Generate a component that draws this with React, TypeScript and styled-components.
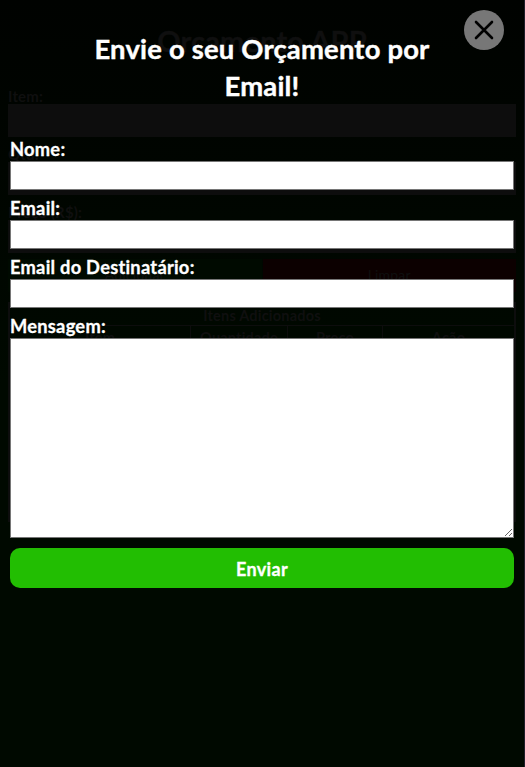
import React from "react";
import styled, { createGlobalStyle } from "styled-components";

const Global = createGlobalStyle`
  * { box-sizing: border-box; }
  body { margin: 0; background: #000300; font-family: Lato, Calibri, sans-serif; overflow: hidden; }
`;
const Stage = styled.div`
  display: grid; width: 525px; height: 767px; overflow: hidden;
  background: linear-gradient(#000200, #000900 50%, #000900);
  border-right: 1px solid #201e2a;
`;
const Budget = styled.main`
  grid-area: 1 / 1; min-width: 0; height: 767px; padding: 20px 8px 0; color: #0f0f0f; overflow: hidden;
`;
const BudgetTitle = styled.h1`
  margin: 0 0 21px; height: 44px; text-align: center; font-size: 29px; line-height: 42px; letter-spacing: 0.15px;
  -webkit-text-stroke: 0.4px currentColor;
`;
const BudgetField = styled.label`
  display: flex; flex-direction: column; height: 58px; font-size: 15px; font-weight: 700; line-height: 22px; letter-spacing: 0.15px;
  &::after { content: ""; margin-top: -3px; height: 33px; background: #0d0d0d; }
`;
const Actions = styled.div`
  display: flex; gap: 1px; height: 33px;
`;
const Action = styled.div<{ $tone: string }>`
  flex: 1; background: ${(p) => p.$tone}; text-align: center; font-size: 14px; line-height: 31px; letter-spacing: 0.2px;
`;
const ItemTable = styled.section`
  margin-top: 10px; height: 220px; border: 2px solid #0d0d0d; text-align: center; font-size: 14.5px; font-weight: 700; letter-spacing: 0.2px;
`;
const Caption = styled.div`
  height: 22px; line-height: 23px; border-bottom: 1px solid #0d0d0d;
`;
const Columns = styled.div`
  display: grid; grid-template-columns: 181px 97px 95px 1fr; line-height: 23px;
`;
const Column = styled.span`
  height: 26px; border-right: 1px solid #0d0d0d;
  &:last-child { border: 0; }
`;
const Modal = styled.section`
  grid-area: 1 / 1; z-index: 1; position: relative; min-width: 0; padding: 30px 10px 0; color: #fff;
`;
const Heading = styled.h2`
  width: 400px; height: 74px; margin: 0 auto 31px; font-size: 27.4px; line-height: 37px; letter-spacing: 0.2px; text-align: center;
  -webkit-text-stroke: 0.4px currentColor;
`;
const Line = styled.span`
  display: block; white-space: nowrap;
`;
const Close = styled.button`
  position: absolute; top: 10px; right: 20px; width: 40px; height: 40px; padding: 0; border: 0; border-radius: 50%;
  display: grid; place-items: center; background: #777; color: #000;
`;
const Form = styled.form`
  display: flex; flex-direction: column;
`;
const Field = styled.label`
  display: flex; flex-direction: column; font-size: 18.3px; font-weight: 700; line-height: 29px; letter-spacing: 0.25px;
  -webkit-text-stroke: 0.3px currentColor;
`;
const Input = styled.input`
  width: 100%; height: 29px; margin: -3px 0 4px; border: 1px solid #767676; background: #fff;
`;
const Message = styled.textarea`
  width: 100%; height: 200px; margin: -3px 0 0; border: 1px solid #767676; background: #fff; resize: vertical;
`;
const Send = styled.button`
  height: 40px; margin-top: 10px; padding: 2px 0 0; border: 0; border-radius: 10px; background: #22be02; color: #fff;
  font: 700 18px Lato, Calibri, sans-serif; letter-spacing: 0.3px;
  -webkit-text-stroke: 0.3px currentColor;
`;

export default function App() {
  return (
    <>
      <Global />
      <Stage>
        <Budget aria-hidden="true">
          <BudgetTitle>Orçamento APP</BudgetTitle>
          <BudgetField>Item:</BudgetField>
          <BudgetField>Qtd:</BudgetField>
          <BudgetField>Preço (R$):</BudgetField>
          <Actions>
            <Action $tone="#000a00">Adicionar</Action>
            <Action $tone="#0c0000">Limpar</Action>
          </Actions>
          <ItemTable>
            <Caption>Itens Adicionados</Caption>
            <Columns>
              <Column>Item</Column>
              <Column>Quantidade</Column>
              <Column>Preço</Column>
              <Column>Ação</Column>
            </Columns>
          </ItemTable>
        </Budget>
        <Modal>
          <Close type="button" aria-label="Fechar">
            <svg width="20" height="20" viewBox="0 0 20 20" fill="none" stroke="currentColor" strokeWidth="2.6" strokeLinecap="round">
              <path d="M2 2 18 18M18 2 2 18" />
            </svg>
          </Close>
          <Heading>
            <Line>Envie o seu Orçamento por</Line>
            <Line>Email!</Line>
          </Heading>
          <Form>
            <Field>Nome:<Input /></Field>
            <Field>Email:<Input /></Field>
            <Field>Email do Destinatário:<Input /></Field>
            <Field>Mensagem:<Message /></Field>
            <Send type="button">Enviar</Send>
          </Form>
        </Modal>
      </Stage>
    </>
  );
}
